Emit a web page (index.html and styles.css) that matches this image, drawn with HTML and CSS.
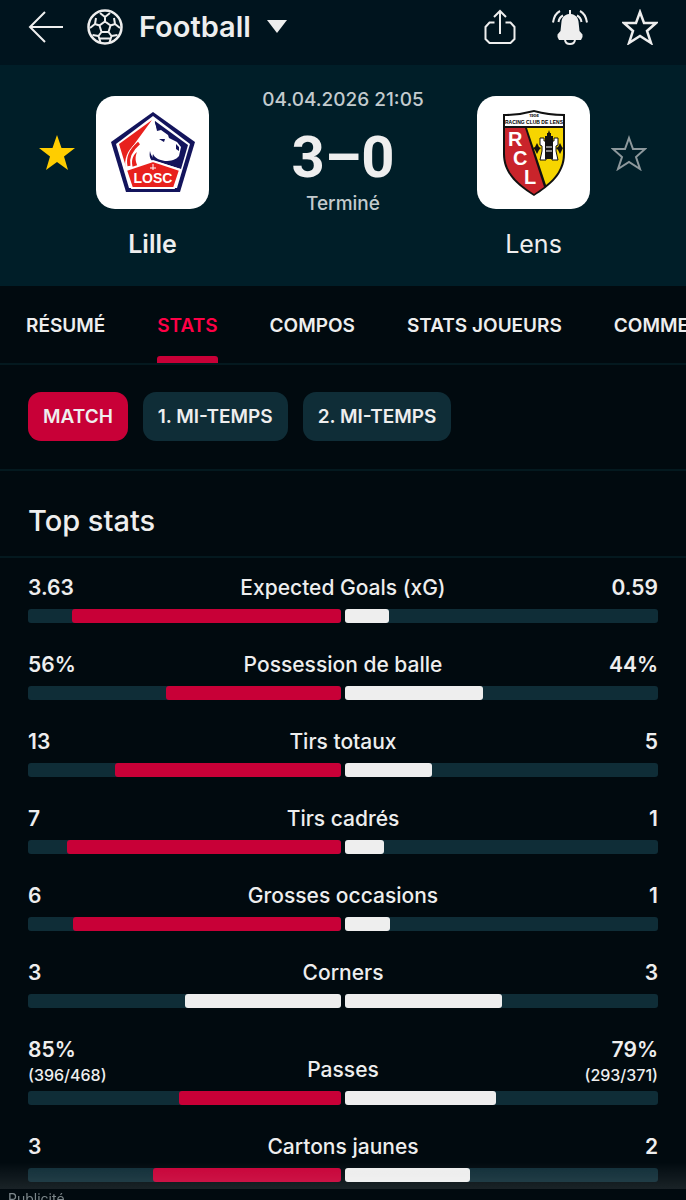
FILE: index.html
```html
<!DOCTYPE html>
<html lang="fr">
<head>
<meta charset="UTF-8">
<meta name="viewport" content="width=device-width, initial-scale=1.0">
<title>Lille - Lens</title>
<link rel="stylesheet" href="styles.css">
</head>
<body>
    <header class="topbar">
        <button class="icon-btn" aria-label="Retour">
            <svg width="36" height="36" viewBox="0 0 36 36" fill="none" stroke="currentColor" stroke-width="2"><path d="M35 18H2M17 3L2 18l15 15"/></svg>
        </button>
        <button class="sport">
            <svg width="36" height="36" viewBox="0 0 36 36" fill="none" stroke="currentColor" stroke-width="2">
                <circle cx="18" cy="18" r="16.500" stroke-width="2.500"/>
                <path d="M18 12.500l5.500 4-2 6.500h-7l-2-6.500zM18 12.500V8M23.500 16.500l4.500-1.500M21.500 23l3 4M14.500 23l-3 4M12.500 16.500L8 15M18 8l-5-4M18 8l5-4M28 15l-1-6M28 15l5 4M8 15l1-6M8 15l-5 4M24.500 27l6-1M24.500 27l-2 6.500M11.500 27l-6-1M11.500 27l2 6.500M13 29.500h10"/>
            </svg>
            <span>Football</span>
            <svg class="caret" width="20" height="13" viewBox="0 0 20 13" fill="currentColor"><path d="M0 0h20L10 13z"/></svg>
        </button>
        <div class="actions">
            <button class="icon-btn" aria-label="Partager">
                <svg width="36" height="36" viewBox="0 0 36 36" fill="none" stroke="currentColor" stroke-width="2"><path d="M12.500 13.500H7.500L3.500 18v12l4 4h21l4-4V18l-4-4.500h-5M18 25V2M12 8l6-6 6 6"/></svg>
            </button>
            <button class="icon-btn" aria-label="Notifications">
                <svg width="36" height="36" viewBox="0 0 36 36" fill="none" stroke="currentColor" stroke-width="2">
                    <path fill="currentColor" stroke="none" d="M17 1h2v4c4 .5 7 3 7.500 7.500L27.500 22l3 3.500V28l-1.500 3H7l-1.500-3v-2.500l3-3.500 1-9.500C10 8 13 5.500 17 5z"/>
                    <path d="M13 31c.5 3 2.500 4 5 4s4.500-1 5-4M8 2C4 4 2 7 1 13.500M11 6.500C8 8 7 10 6.500 13M28 2c4 2 6 5 7 11.500M25 6.500c3 1.500 4 3.500 4.500 6.500"/>
                </svg>
            </button>
            <button class="icon-btn" aria-label="Ajouter aux favoris">
                <svg width="36" height="36" viewBox="0 0 36 36" fill="none" stroke="currentColor" stroke-width="2.500"><path d="M18 3l4 11h12l-9 8 4 12-11-7-11 7 4-12-9-8h12z"/></svg>
            </button>
        </div>
    </header>

    <section class="match">
        <button class="fav fav-on" aria-label="Retirer Lille des favoris">
            <svg width="36" height="36" viewBox="0 0 36 36" fill="currentColor"><path d="M18 0l4.500 13H36L25 21.500 29 35l-11-8-11 8 4-13.500L0 13h13.500z"/></svg>
        </button>
        <div class="team">
            <div class="logo">
                <svg width="86" height="86" viewBox="0 0 86 86">
                    <path fill="#13145c" d="M43 2l42 30-15 50H16L1 32z"/>
                    <path fill="#fff" d="M43 6l37 28-13 44H19L6 34z"/>
                    <path fill="#e8211d" d="M42 10L9 34l7 23h4V40z"/>
                    <path fill="#13145c" d="M45 11l33 24-7 24-26-8-8-13z"/>
                    <path fill="#fff" d="M44 10l3 9 4 1 7 5 1 3 8 4 4 5-2 9c-3 4-8 5-14 5-6-1-10-3-12-7l-2 9-24 8c-4-7-1-18 5-24 7-8 17-8 20-27z"/>
                    <path fill="none" stroke="#e8211d" stroke-width="3" d="M19 56c-2-9 3-17 10-23"/>
                    <path fill="#e8211d" d="M28 57c-3-6-3-10-1-15-5 4-6 10-4 16z"/>
                    <path fill="#13145c" d="M45 11l6 9-4 1zM49 29h6l-1 3zM66 34l3 3v4l-3-2zM40 41c1 6 4 8 9 10l-5 1c-4-2-5-6-4-11z"/>
                    <path fill="#e8211d" stroke="#fff" stroke-width="2" d="M16 60l27-9 27 9-6 18H22z"/>
                    <path stroke="#fff" d="M43 54v6M40 58h6"/>
                    <text class="losc" x="43" y="73" text-anchor="middle" fill="#fff">LOSC</text>
                </svg>
            </div>
            <span class="team-name team-strong">Lille</span>
        </div>
        <div class="info">
            <time class="date" datetime="2026-04-04T21:05">04.04.2026 21:05</time>
            <div class="score">3–0</div>
            <div class="status">Terminé</div>
        </div>
        <div class="team">
            <div class="logo">
                <svg width="64" height="86" viewBox="0 0 64 86">
                    <path fill="#111" d="M1 4Q17 4 32 0q15 4 31 4v40c0 20-15 32-31 42C16 76 1 64 1 44z"/>
                    <path fill="#fff" d="M3 6q15 0 29-4 14 4 29 4v10H3z"/>
                    <path fill="#c9242b" d="M3 18h20l19 59-10 7C17 74 3 63 3 44z"/>
                    <path fill="#f6d500" d="M25 18h36v26c0 14-8 24-17 31z"/>
                    <text class="lens-year" x="32" y="7" text-anchor="middle">1906</text>
                    <text class="lens-name" x="32" y="14" text-anchor="middle">RACING CLUB DE LENS</text>
                    <g class="rcl" fill="#fff">
                        <text x="6" y="36">R</text>
                        <text x="11" y="55">C</text>
                        <text x="22" y="74">L</text>
                    </g>
                    <path fill="#fff" stroke="#111" d="M38 28h4v3h10v-3h4v7l-2 1v5l2 9h-6v-5h-6v5h-6l2-9v-5l-2-1z"/>
                    <path fill="#111" d="M43 26h2v-3h4v3h2v23h-8zM47 20l1 3h-2zM35 33l2 4 2 1-2 2-2 4-2-4-2-2 2-1zM58 33l2 4 1 1-1 2-2 4-2-4-2-2 2-1z"/>
                    <path stroke="#fff" d="M44 37h6M44 41h6"/>
                </svg>
            </div>
            <span class="team-name">Lens</span>
        </div>
        <button class="fav" aria-label="Ajouter Lens aux favoris">
            <svg width="36" height="36" viewBox="0 0 36 36" fill="none" stroke="currentColor" stroke-width="2"><path d="M18 3l4 11h12l-9 8 4 12-11-7-11 7 4-12-9-8h12z"/></svg>
        </button>
    </section>

    <nav class="tabs">
        <a href="#">RÉSUMÉ</a>
        <a href="#" class="active" aria-current="page">STATS</a>
        <a href="#">COMPOS</a>
        <a href="#">STATS JOUEURS</a>
        <a href="#">COMMENTAIRES</a>
    </nav>

    <div class="filters">
        <button class="filter selected">MATCH</button>
        <button class="filter">1. MI-TEMPS</button>
        <button class="filter">2. MI-TEMPS</button>
    </div>

    <main>
        <h2>Top stats</h2>
        <ul class="stats">
            <li>
                <div class="values"><b>3.63</b><span>Expected Goals (xG)</span><b>0.59</b></div>
                <div class="bars"><div class="home"><i class="lead" style="width:86%"></i></div><div><i style="width:14%"></i></div></div>
            </li>
            <li>
                <div class="values"><b>56%</b><span>Possession de balle</span><b>44%</b></div>
                <div class="bars"><div class="home"><i class="lead" style="width:56%"></i></div><div><i style="width:44%"></i></div></div>
            </li>
            <li>
                <div class="values"><b>13</b><span>Tirs totaux</span><b>5</b></div>
                <div class="bars"><div class="home"><i class="lead" style="width:72.2%"></i></div><div><i style="width:27.8%"></i></div></div>
            </li>
            <li>
                <div class="values"><b>7</b><span>Tirs cadrés</span><b>1</b></div>
                <div class="bars"><div class="home"><i class="lead" style="width:87.5%"></i></div><div><i style="width:12.5%"></i></div></div>
            </li>
            <li>
                <div class="values"><b>6</b><span>Grosses occasions</span><b>1</b></div>
                <div class="bars"><div class="home"><i class="lead" style="width:85.7%"></i></div><div><i style="width:14.3%"></i></div></div>
            </li>
            <li>
                <div class="values"><b>3</b><span>Corners</span><b>3</b></div>
                <div class="bars"><div class="home"><i style="width:50%"></i></div><div><i style="width:50%"></i></div></div>
            </li>
            <li>
                <div class="values"><b>85%<small>(396/468)</small></b><span>Passes</span><b>79%<small>(293/371)</small></b></div>
                <div class="bars"><div class="home"><i class="lead" style="width:51.8%"></i></div><div><i style="width:48.2%"></i></div></div>
            </li>
            <li>
                <div class="values"><b>3</b><span>Cartons jaunes</span><b>2</b></div>
                <div class="bars"><div class="home"><i class="lead" style="width:60%"></i></div><div><i style="width:40%"></i></div></div>
            </li>
        </ul>
    </main>

    <aside class="ad">Publicité</aside>
</body>
</html>
```
FILE: styles.css
```css
* {
    box-sizing: border-box;
}
body {
    margin: 0;
    background: #010a0f;
    color: #eee;
    font: 500 21px/26px Inter, "Liberation Sans", sans-serif;
    overflow-x: hidden;
}
button {
    padding: 0;
    border: 0;
    background: none;
    color: inherit;
    font: inherit;
    cursor: pointer;
}
svg {
    display: block;
}

/* top bar */
.topbar {
    display: flex;
    align-items: center;
    height: 65px;
    padding: 0 28px 12px;
    background: #00141e;
}
.sport {
    display: flex;
    align-items: center;
    gap: 16px;
    margin-left: 23px;
    font-size: 29px;
    font-weight: 600;
}
.actions {
    display: flex;
    gap: 34px;
    margin-left: auto;
}

/* match header */
.match {
    display: grid;
    grid-template-columns: 36px 113px 1fr 113px 36px;
    column-gap: 21px;
    height: 221px;
    padding: 31px 39px 0;
    background: #001e28;
}
.fav {
    height: 113px;
    color: #8d989c;
}
.fav-on {
    color: #ffcd00;
}
.team {
    display: flex;
    flex-direction: column;
    align-items: center;
    gap: 20px;
}
.logo {
    display: flex;
    align-items: center;
    justify-content: center;
    width: 113px;
    height: 113px;
    border-radius: 19px;
    background: #fff;
}
.team-name {
    font-size: 25px;
    font-weight: 400;
    line-height: 30px;
}
.team-strong {
    font-weight: 600;
}
.losc {
    font: 700 14px "Liberation Sans", sans-serif;
}
.lens-year {
    font: 700 4px Inter, sans-serif;
}
.lens-name {
    font: 700 5px "Liberation Sans", sans-serif;
}
.rcl {
    font: 700 20px/20px "Liberation Sans", sans-serif;
}
.info {
    display: flex;
    flex-direction: column;
    align-items: center;
    margin-top: -9px;
    color: #c3cbce;
    font-size: 19px;
    white-space: nowrap;
}
.score {
    margin-top: 10px;
    color: #eee;
    font: 700 58px/68px Roboto, sans-serif;
}

/* tabs */
.tabs {
    display: flex;
    gap: 52px;
    height: 79px;
    padding: 0 26px;
    border-bottom: 2px solid #04191f;
    overflow: hidden;
    font-size: 19px;
    font-weight: 600;
    white-space: nowrap;
}
.tabs a {
    height: 77px;
    line-height: 79px;
    color: #eee;
    text-decoration: none;
}
.tabs .active {
    position: relative;
    color: #ff0046;
}
.tabs .active::after {
    content: "";
    position: absolute;
    left: 0;
    right: 0;
    bottom: 0;
    height: 7px;
    border-radius: 3px 3px 0 0;
    background: #c80037;
}

/* period filter */
.filters {
    display: flex;
    gap: 15px;
    padding: 27px 28px 28px;
    border-bottom: 2px solid #04191f;
}
.filter {
    height: 49px;
    padding: 0 15px;
    border-radius: 13px;
    background: #0f2d37;
    font-size: 19px;
    font-weight: 600;
}
.filter.selected {
    background: #c80037;
}

/* statistics */
h2 {
    margin: 0;
    padding: 33px 28px 18px;
    border-bottom: 2px solid #04191f;
    font-size: 29px;
    font-weight: 500;
    line-height: 34px;
}
.stats {
    margin: 0;
    padding: 17px 28px 0;
    list-style: none;
}
.stats li {
    margin-bottom: 29px;
}
.stats li:last-child {
    margin-bottom: 0;
}
.values {
    display: grid;
    grid-template-columns: 1fr auto 1fr;
    align-items: end;
}
.values b {
    font-weight: 600;
}
.values b:last-child {
    text-align: right;
}
.values small {
    display: block;
    margin-bottom: -4px;
    font-size: 16px;
    font-weight: 500;
    line-height: 24px;
}
.bars {
    display: flex;
    gap: 4px;
    margin-top: 8px;
}
.bars div {
    display: flex;
    flex: 1;
    height: 14px;
    border-radius: 3px;
    background: #0f2d37;
}
.bars .home {
    justify-content: flex-end;
}
.bars i {
    border-radius: 3px;
    background: #eee;
}
.bars .lead {
    background: #c80037;
}

/* ad strip pinned over the list */
.ad {
    position: fixed;
    bottom: 0;
    left: 0;
    right: 0;
    height: 11px;
    padding-left: 8px;
    background: #010a0f;
    color: #7d878b;
    font-size: 14px;
    font-weight: 400;
    line-height: 20px;
}
.ad::before {
    content: "";
    position: absolute;
    left: 0;
    right: 0;
    bottom: 100%;
    height: 28px;
    background: linear-gradient(transparent, rgba(255, 255, 255, 0.1));
}
```
